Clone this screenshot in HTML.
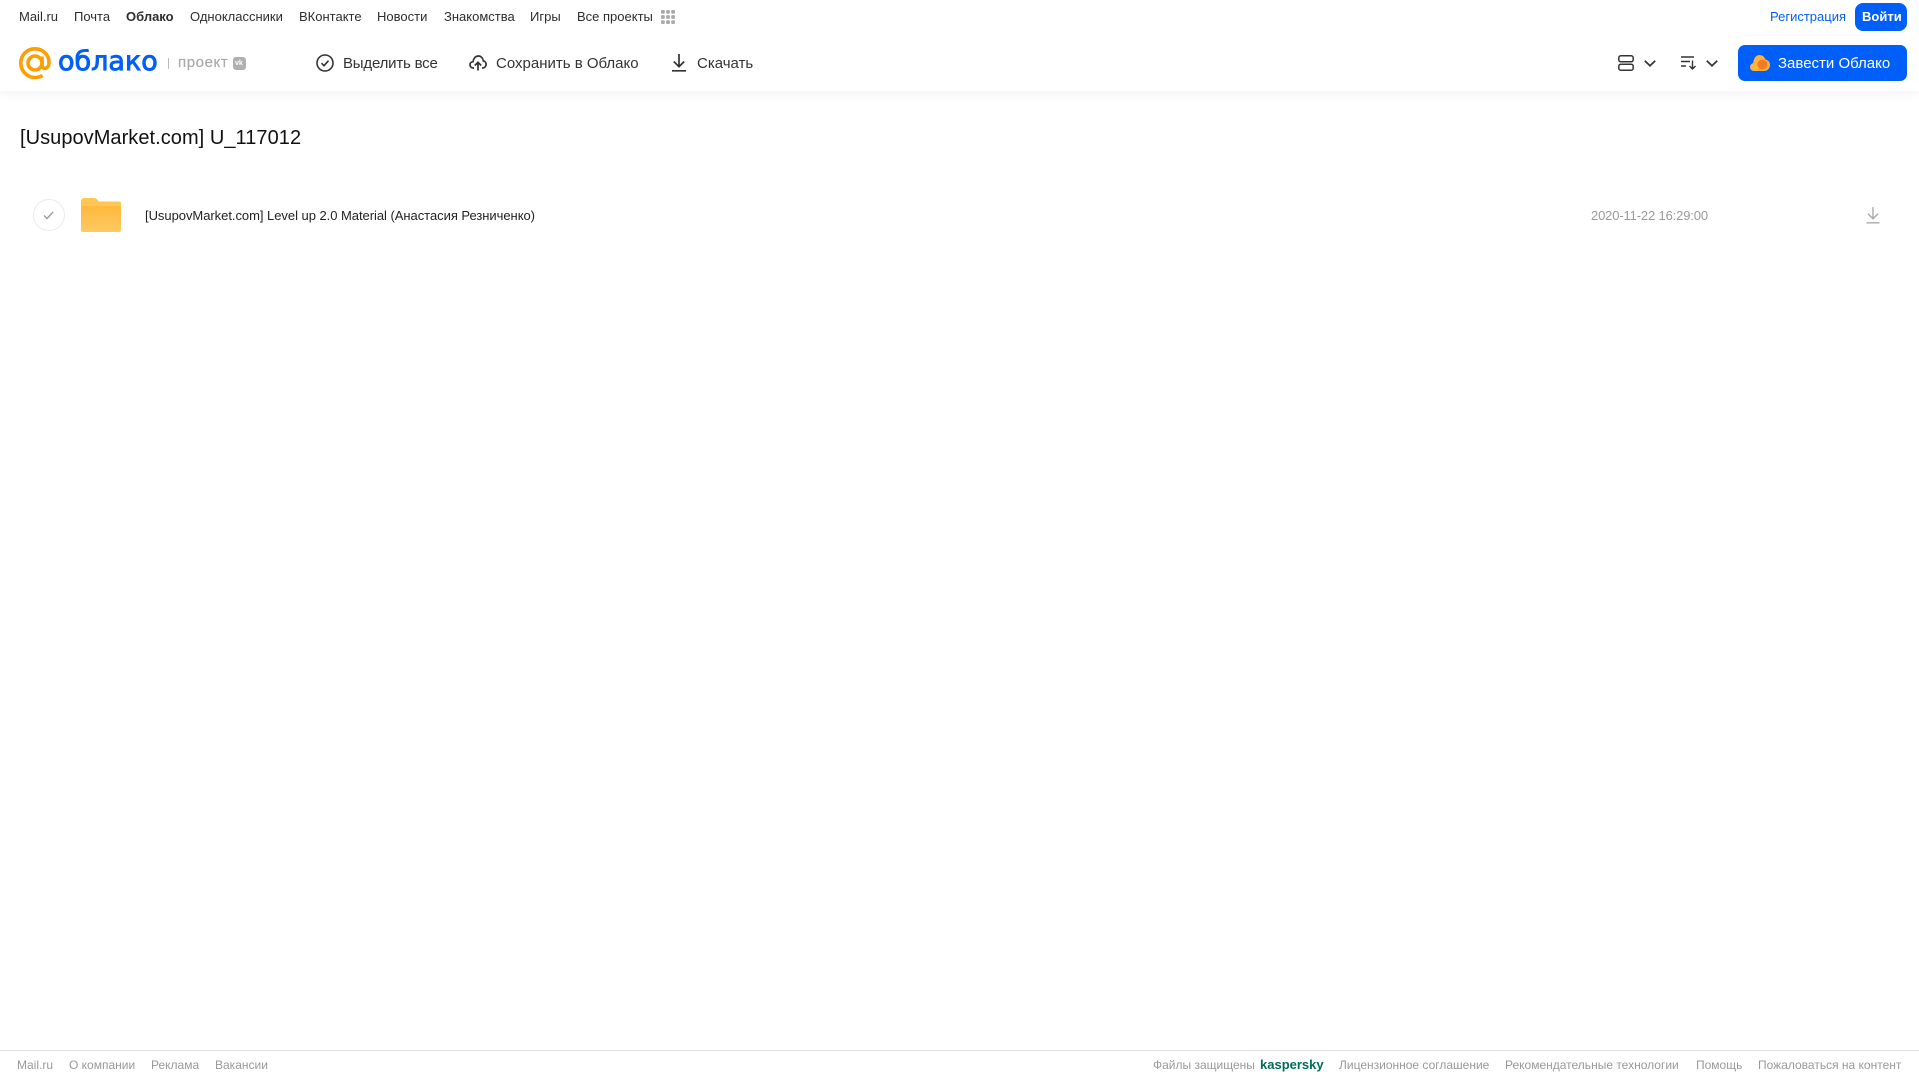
<!DOCTYPE html>
<html lang="ru"><head><meta charset="utf-8"><title>Облако</title>
<style>
html,body{margin:0;padding:0;background:#fff}
body{width:1919px;height:1079px;position:relative;overflow:hidden;font-family:"Liberation Sans",Arial,sans-serif;color:#2c2d2e}
.t{position:absolute;white-space:nowrap;line-height:20px}
.n{top:7px;font-size:13px;color:#2c2d2e}
.b{top:54px;font-size:15px;color:#333}
.f{top:1055px;font-size:12px;color:#999}
svg{position:absolute;overflow:visible}
</style></head><body>
<div style="position:absolute;left:0;top:0;width:1919px;height:91px;background:#fff;box-shadow:0 2px 10px rgba(0,0,0,.06)"></div>

<span class="t n" style="left:19px">Mail.ru</span>
<span class="t n" style="left:74px">Почта</span>
<span class="t n" style="left:126px;font-weight:bold">Облако</span>
<span class="t n" style="left:190px">Одноклассники</span>
<span class="t n" style="left:299px">ВКонтакте</span>
<span class="t n" style="left:377px">Новости</span>
<span class="t n" style="left:444px">Знакомства</span>
<span class="t n" style="left:530px">Игры</span>
<span class="t n" style="left:577px">Все проекты</span>
<svg style="left:661px;top:10px" width="14" height="14" viewBox="0 0 14 14" fill="#aaa"><rect x="0" y="0" width="3.800" height="3.800" rx="1"/><rect x="5.100" y="0" width="3.800" height="3.800" rx="1"/><rect x="10.200" y="0" width="3.800" height="3.800" rx="1"/><rect x="0" y="5.100" width="3.800" height="3.800" rx="1"/><rect x="5.100" y="5.100" width="3.800" height="3.800" rx="1"/><rect x="10.200" y="5.100" width="3.800" height="3.800" rx="1"/><rect x="0" y="10.200" width="3.800" height="3.800" rx="1"/><rect x="5.100" y="10.200" width="3.800" height="3.800" rx="1"/><rect x="10.200" y="10.200" width="3.800" height="3.800" rx="1"/></svg>

<span class="t" style="left:1770px;top:7px;font-size:13px;color:#005ff9">Регистрация</span>
<div style="position:absolute;left:1855px;top:3px;width:52px;height:28px;background:#005ff9;border-radius:8px"></div>
<span class="t" style="left:1862px;top:7px;font-size:13px;font-weight:bold;color:#fff">Войти</span>

<!-- logo -->
<svg style="left:19px;top:47px" width="32" height="33" viewBox="0 0 32 33" fill="none" stroke="#ff9e00" stroke-width="3.600"><circle cx="16" cy="16" r="7"/><path d="M23 9.500V18c0 5 6.800 4.500 7-2 .3-8-6-14.200-14-14.200S1.800 8 1.800 16 8 30.500 16 30.500c3 0 5.500-.7 7.500-2"/></svg>
<span class="t" style="left:58px;top:44px;font-size:27px;line-height:36px;font-family:'DejaVu Sans',sans-serif;color:#005ff9;-webkit-text-stroke:.9px #005ff9;letter-spacing:0">облако</span>
<div style="position:absolute;left:168px;top:58px;width:1px;height:11px;background:#bbb"></div>
<span class="t" style="left:178px;top:53px;font-size:15px;color:#aaa;-webkit-text-stroke:.2px #aaa;letter-spacing:.6px">проект</span>
<div style="position:absolute;left:233px;top:57px;width:13px;height:13px;border-radius:3px;background:#b0b0b0"></div>
<span class="t" style="left:235px;top:54px;font-size:7px;font-weight:bold;color:#fff">vk</span>

<!-- toolbar -->
<svg style="left:316px;top:54px" width="18" height="18" viewBox="0 0 18 18" fill="none" stroke="#333" stroke-width="1.600"><circle cx="9" cy="9" r="8"/><path d="M5.500 9.200l2.500 2.500 4.500-5"/></svg>
<span class="t b" style="left:343px;letter-spacing:-.2px">Выделить все</span>
<svg style="left:469px;top:55px" width="18" height="16" viewBox="0 0 18 16" fill="none" stroke="#333" stroke-width="1.700"><path d="M5 13H4.200C2.300 13 1 11.500 1 9.800 1 8 2.300 6.800 4 6.700 4.400 3.500 6.500 1 9.300 1c2.800 0 4.700 2.200 5 4.800 1.600.3 2.800 1.800 2.800 3.600 0 2-1.500 3.600-3.400 3.600H13"/><path d="M9 15.500V7.500M5.800 10.500L9 7.300l3.200 3.200"/></svg>
<span class="t b" style="left:496px">Сохранить в Облако</span>
<svg style="left:672px;top:54px" width="14" height="18" viewBox="0 0 14 18" fill="none" stroke="#333" stroke-width="1.700"><path d="M7 0v12.500M1.800 7.500L7 12.700l5.200-5.200M0 16.800h14"/></svg>
<span class="t b" style="left:697px">Скачать</span>

<svg style="left:1618px;top:55px" width="16" height="16" viewBox="0 0 16 16" fill="none" stroke="#333" stroke-width="1.500"><rect x=".8" y=".8" width="14.400" height="6" rx="2"/><rect x=".8" y="9.200" width="14.400" height="6" rx="2"/></svg>
<svg style="left:1644px;top:60px" width="12" height="7" viewBox="0 0 12 7" fill="none" stroke="#333" stroke-width="1.700"><path d="M.8.800L6 5.800 11.200.8"/></svg>
<svg style="left:1681px;top:56px" width="16" height="14" viewBox="0 0 16 14" fill="none" stroke="#333" stroke-width="1.400"><path d="M0 1h13M0 5.500h9M0 10h5M11.500 4.500V13M8.500 10l3 3 3-3"/></svg>
<svg style="left:1706px;top:60px" width="12" height="7" viewBox="0 0 12 7" fill="none" stroke="#333" stroke-width="1.700"><path d="M.8.800L6 5.800 11.200.8"/></svg>

<div style="position:absolute;left:1738px;top:45px;width:169px;height:36px;background:#005ff9;border-radius:7px"></div>
<svg style="left:1750px;top:54px" width="20" height="17" viewBox="0 0 20 17"><path d="M4 17C1.800 17 0 15.200 0 13c0-2 1.400-3.600 3.200-3.900C3.500 4.500 6 1 9.500 1c2.800 0 5 1.900 5.800 4.500C17.900 5.900 20 8 20 11c0 3.300-2.600 6-6 6z" fill="#ffb33e"/><circle cx="12.500" cy="10.500" r="5" fill="#f57a24"/></svg>
<span class="t" style="left:1778px;top:54px;font-size:15px;color:#fff">Завести Облако</span>

<!-- content -->
<span class="t" style="left:20px;top:126px;font-size:20px;line-height:24px;color:#111;letter-spacing:.05px">[UsupovMarket.com] U_117012</span>

<div style="position:absolute;left:33px;top:199px;width:30px;height:30px;border:1px solid #ececec;border-radius:50%"></div>
<svg style="left:43px;top:211px" width="11" height="9" viewBox="0 0 11 9" fill="none" stroke="#999" stroke-width="1.300"><path d="M1 4.500l3 3 6-6.500"/></svg>
<svg style="left:81px;top:198px" width="40" height="34" viewBox="0 0 40 34"><defs><linearGradient id="g" x1="0" y1="0" x2="0" y2="1"><stop offset="0" stop-color="#ffb93d"/><stop offset="1" stop-color="#ffc963"/></linearGradient></defs><path d="M0 3a3 3 0 0 1 3-3h10c2 0 3 1 4 2.500L18 3.500H38a2 2 0 0 1 2 2V32a2 2 0 0 1-2 2H2a2 2 0 0 1-2-2z" fill="#ffc655"/><path d="M0 8h40v24a2 2 0 0 1-2 2H2a2 2 0 0 1-2-2z" fill="url(#g)"/></svg>
<span class="t" style="left:145px;top:206px;font-size:13px;color:#222;letter-spacing:-.04px">[UsupovMarket.com] Level up 2.0 Material (Анастасия Резниченко)</span>
<span class="t" style="left:1591px;top:206px;font-size:13px;color:#999;letter-spacing:-.15px">2020-11-22 16:29:00</span>
<svg style="left:1866px;top:207px" width="14" height="17" viewBox="0 0 14 17" fill="none" stroke="#aaa" stroke-width="1.400"><path d="M7 0v11.500M2 6.800l5 5 5-5M.5 15.800h13"/></svg>

<!-- footer -->
<div style="position:absolute;left:0;top:1050px;width:1919px;height:1px;background:#ddd"></div>
<span class="t f" style="left:17px">Mail.ru</span>
<span class="t f" style="left:69px">О компании</span>
<span class="t f" style="left:151px">Реклама</span>
<span class="t f" style="left:215px">Вакансии</span>
<span class="t f" style="left:1153px">Файлы защищены</span>
<span class="t f" style="left:1260px;font-weight:bold;font-size:13px;color:#006d5c">kaspersky</span>
<span class="t f" style="left:1339px">Лицензионное соглашение</span>
<span class="t f" style="left:1505px">Рекомендательные технологии</span>
<span class="t f" style="left:1696px">Помощь</span>
<span class="t f" style="left:1758px">Пожаловаться на контент</span>
</body></html>
